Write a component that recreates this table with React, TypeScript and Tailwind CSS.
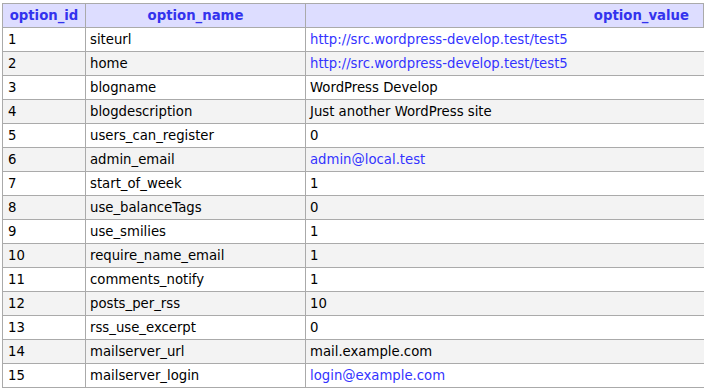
const rows: [number, string, string, boolean?][] = [
  [1, "siteurl", "http://src.wordpress-develop.test/test5", true],
  [2, "home", "http://src.wordpress-develop.test/test5", true],
  [3, "blogname", "WordPress Develop"],
  [4, "blogdescription", "Just another WordPress site"],
  [5, "users_can_register", "0"],
  [6, "admin_email", "admin@local.test", true],
  [7, "start_of_week", "1"],
  [8, "use_balanceTags", "0"],
  [9, "use_smilies", "1"],
  [10, "require_name_email", "1"],
  [11, "comments_notify", "1"],
  [12, "posts_per_rss", "10"],
  [13, "rss_use_excerpt", "0"],
  [14, "mailserver_url", "mail.example.com"],
  [15, "mailserver_login", "login@example.com", true],
];

export default function App() {
  return (
    <div className="w-[706px] h-[390px] overflow-hidden bg-white pt-[3px] pl-[2px] font-['DejaVu_Sans',Verdana,sans-serif] text-[13.25px] text-black">
      <table className="w-[702px] table-fixed border-collapse">
        <colgroup>
          <col className="w-[83px]" />
          <col className="w-[220px]" />
          <col />
        </colgroup>
        <thead>
          <tr className="h-[24px] bg-[#ddddff] text-[#3333ee] font-bold">
            <th className="border border-[#aaaaaa] text-center font-bold">option_id</th>
            <th className="border border-[#aaaaaa] text-center font-bold">option_name</th>
            <th className="border border-[#aaaaaa] text-right pr-[14px] font-bold">option_value</th>
          </tr>
        </thead>
        <tbody>
          {rows.map(([id, name, value, link], i) => (
            <tr key={id} className={`h-[24px] ${i % 2 === 1 ? "bg-[#f3f3f3]" : "bg-white"}`}>
              <td className="border-l border-b border-[#aaaaaa] pl-[5px] whitespace-nowrap">{id}</td>
              <td className="border-l border-b border-[#aaaaaa] pl-[4px] whitespace-nowrap">{name}</td>
              <td className={`border-l border-b border-[#aaaaaa] pl-[4px] whitespace-nowrap ${link ? "text-[#3333ff]" : ""}`}>
                {value}
              </td>
            </tr>
          ))}
        </tbody>
      </table>
    </div>
  );
}
